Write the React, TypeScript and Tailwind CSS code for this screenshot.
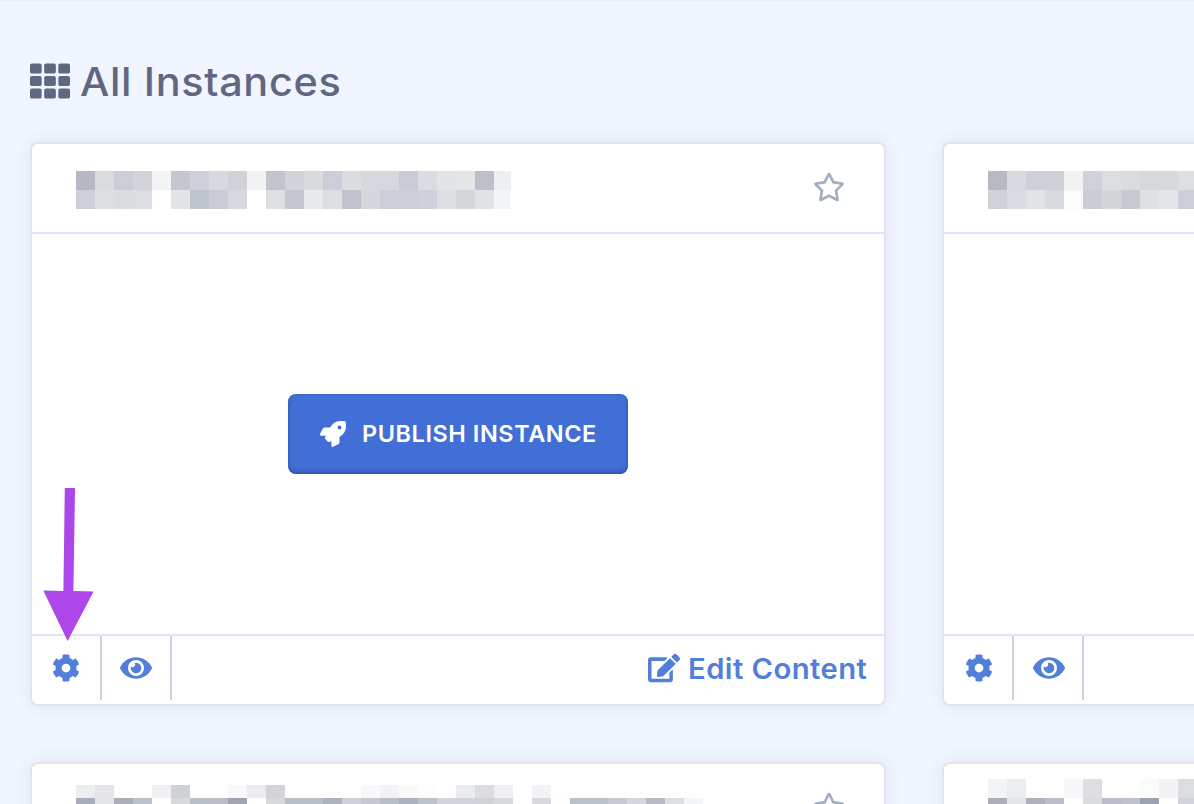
import React from "react";
import { FaTh, FaRegStar, FaRocket, FaCog, FaEye, FaEdit } from "react-icons/fa";

type Row = { height: number; cells: string[] };

const names: Record<string, Row[]> = {
  first: [
    { height: 19, cells: "b5b9c5 dadbe0 cbced7 d3d4d9 f3f4f6 c3c7cf ced1db d8d9de d1d2d7 f1f2f4 c2c4ce d2d3d8 d9dade cbced8 dbdce0 d5d8dc d5d8dc c9ccd6 d9dce0 e3e4e8 e5e6ea bdc0ca eeeff1".split(" ") },
    { height: 19, cells: "cdcfd9 dddee2 dbdce1 dcdde1 - e3e4e8 bfc4cd cacdd7 d7d8dd - dedfe3 c5c8d2 e8e9ed dddee3 c0c3cd d6d7dc cbced8 cccfd8 ced0da dddee2 d6d7dc e1e2e6 f3f4f6".split(" ") },
  ],
  second: [
    { height: 19, cells: "b6bac3 d9dadf cdd0d9 ced1da f2f2f4 cfd1db dcdde0 dadbdf d7d8dc d8d9dd dedfe3".split(" ") },
    { height: 19, cells: "d1d2d7 dbdce1 e2e3e6 d7dadf fbfbfb cacdd6 d3d6d9 c8cad3 dfe0e4 e4e5e9 cbced7".split(" ") },
  ],
  third: [
    { height: 13, cells: "ecedee e4e5e9 - - f0f0f2 cfd1d9 - - f8f9fb ebecf0 d3d3d8 - - - - f8f9fa f3f3f5 fafafa fdfdfd - ebecf0 dcdde1 eff0f2 - f2f3f6".split(" ") },
    { height: 19, cells: "a9adb9 e5e6e9 a9aeb9 bbc0ca - d8d9dd b9bec8 babdc7 a1a5b1 - d8d9dd b9bdc7 b9bec8 aeb2be ced1da c5c8d1 babec8 adb1be bcc1ca d2d4d9 d1d5d9 d0d3d8 d8d9dd - d8d9de fdfdfd bbc0ca bbc0ca c7c8d1 d6d7dc b5bac3 dedfe3 f4f5f8".split(" ") },
  ],
  fourth: [
    { height: 19, cells: "f3f4f6 ecedee - - f6f7f9 dddee2 - - fafbfb f3f3f6 dcdde1".split(" ") },
    { height: 19, cells: "acafba e5e6e9 aeb1bc bbbeca - dadbdf babdc9 bdc1cb 9da1af - d1d5d9".split(" ") },
  ],
};

function RedactedName({ rows }: { rows: Row[] }) {
  return (
    <div className="flex flex-col overflow-hidden">
      {rows.map((row, r) => (
        <div key={r} className="flex" style={{ height: row.height }}>
          {row.cells.map((c, i) => (
            <span
              key={i}
              className={i === 22 && row.cells.length === 23 ? "w-[17px] shrink-0" : "w-[19px] shrink-0"}
              style={{ backgroundColor: c === "-" ? "transparent" : "#" + c }}
            />
          ))}
        </div>
      ))}
    </div>
  );
}

type CardProps = { rows: Row[]; offset?: string; iconPad?: string; publish?: boolean };

function InstanceCard({ rows, offset = "pt-[27px]", iconPad = "", publish = false }: CardProps) {
  const action = "flex h-16 w-[70px] items-center justify-center border-r-2 border-[#c9d4e8] pb-px " + iconPad;
  return (
    <article className="flex h-[564px] w-[856px] shrink-0 flex-col rounded-lg border-2 border-[#e2e4e7] bg-white shadow-[0_0_16px_rgba(80,110,190,0.12)]">
      <header className={"flex h-[90px] shrink-0 items-start justify-between border-b-2 border-[#dfe6fb] pr-[39px] pl-[44px] " + offset}>
        <RedactedName rows={rows} />
      </header>
      <div className="flex h-[400px] shrink-0 items-center justify-center">
        {publish && (
          <button className="flex h-20 w-[340px] items-center rounded-lg bg-[#416fd6] pl-8 text-white shadow-[inset_0_-3px_4px_rgba(30,50,110,0.35),inset_0_0_2px_rgba(30,50,110,0.35)]">
            <FaRocket className="size-[26px] shrink-0" />
            <span className="ml-4 pb-px font-['Inter'] text-[23.5px] leading-none font-semibold tracking-[0.55px] whitespace-nowrap">PUBLISH INSTANCE</span>
          </button>
        )}
      </div>
      <footer className="flex h-[70px] shrink-0 items-start border-t-2 border-[#dfe6fb] text-[#527fda]">
        <button className={action}>
          <FaCog className="size-7" />
        </button>
        <button className={action}>
          <FaEye className="size-8" />
        </button>
        <a className="mr-[17px] ml-auto flex h-16 items-center pb-px">
          <FaEdit className="size-8" />
          <span className="ml-2 w-[179px] origin-left scale-x-[1.045] pt-0.5 font-['Inter'] text-[28px] leading-none font-semibold tracking-[0.4px] whitespace-nowrap">Edit Content</span>
        </a>
      </footer>
    </article>
  );
}

function StarredCard(props: CardProps) {
  return (
    <div className="relative">
      <InstanceCard {...props} />
      <FaRegStar className="absolute top-[29px] left-[783px] size-8 text-[#a3aebf]" />
    </div>
  );
}

export default function App() {
  return (
    <main className="relative h-[804px] w-[1194px] overflow-hidden border-t border-[#e8eefb] bg-[#f0f5ff]">
      <h1 className="flex h-[141px] items-start pt-[60px] pl-[30px] text-[#5f6880]">
        <FaTh className="size-10" />
        <span className="ml-[10px] origin-left scale-x-[1.062] pt-px font-['Inter'] text-[39px] leading-10 font-medium tracking-[0.6px] whitespace-nowrap">All Instances</span>
      </h1>
      <section className="grid grid-cols-[856px_856px] gap-14 pl-[30px]">
        <StarredCard rows={names.first} publish />
        <StarredCard rows={names.second} iconPad="pl-0.5" />
        <StarredCard rows={names.third} offset="pt-[21px]" />
        <StarredCard rows={names.fourth} offset="pt-[15px]" iconPad="pl-0.5" />
      </section>
      <svg className="absolute top-[486px] left-[42px]" width="54" height="156" viewBox="42 487 54 156" fill="#ad47e9">
        <path d="M64.8 488H75L73.4 591L93.6 591.5L67.6 641L43.3 590.5L63.4 591Z" />
      </svg>
    </main>
  );
}
